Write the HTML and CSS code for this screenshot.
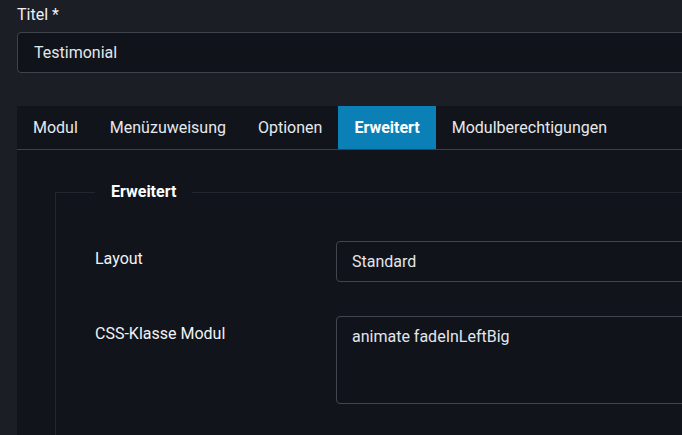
FILE: index.html
```html
<!DOCTYPE html>
<html lang="de">
<head>
<meta charset="utf-8">
<title>Modul</title>
<link rel="stylesheet" href="styles.css">
</head>
<body>
<div class="page">
  <div class="title-field">
    <label class="field-label" for="title">Titel *</label>
    <div class="text-input" id="title">Testimonial</div>
  </div>

  <div class="tabs">
    <div class="tab-bar">
      <div class="tab">Modul</div>
      <div class="tab">Menüzuweisung</div>
      <div class="tab">Optionen</div>
      <div class="tab active">Erweitert</div>
      <div class="tab">Modulberechtigungen</div>
    </div>
    <div class="tab-panel">
      <fieldset class="options">
        <legend class="options-legend">Erweitert</legend>
        <div class="options-body">
          <div class="row">
            <div class="row-label">Layout</div>
            <div class="select-box">Standard</div>
          </div>
          <div class="row">
            <div class="row-label">CSS-Klasse Modul</div>
            <div class="textarea-box">animate fadeInLeftBig</div>
          </div>
        </div>
      </fieldset>
    </div>
  </div>
</div>
</body>
</html>
```

FILE: styles.css
```css
html, body {
  margin: 0;
  height: 435px;
  overflow: hidden;
  background: #1b1e25;
}

body {
  font-family: Roboto, "Liberation Sans", sans-serif;
  font-size: 16px;
  color: #e8ebef;
}

.page {
  width: 760px;
  padding: 4px 0 0 17px;
}

.title-field {
  display: flex;
  flex-direction: column;
}

.field-label {
  line-height: 22px;
  height: 22px;
  margin-bottom: 6px;
  color: #eef0f3;
}

.text-input {
  height: 39px;
  line-height: 40px;
  padding: 0 16px;
  border: 1px solid #3f434b;
  border-radius: 4px;
  background: #10131a;
  color: #e3e6ea;
}

.tabs {
  margin-top: 33px;
  background: #11141b;
}

.tab-bar {
  display: flex;
  height: 43px;
  border-bottom: 1px solid #3c4048;
}

.tab {
  padding: 0 16px;
  line-height: 44px;
  height: 43px;
  color: #e6e9ed;
  white-space: nowrap;
}

.tab.active {
  background: #0b80b7;
  color: #ffffff;
  font-weight: 700;
}

.tab-panel {
  padding: 31px 0 0 38px;
  background: #11141b;
}

.options {
  margin: 0;
  padding: 0;
  border: 1px solid #22262e;
  border-right: none;
  min-width: 0;
}

.options-legend {
  margin-left: 39px;
  padding: 0 16px;
  line-height: 22px;
  font-weight: 700;
  color: #ffffff;
}

.options-body {
  padding: 38px 0 80px 39px;
  display: flex;
  flex-direction: column;
  gap: 34px;
}

.row {
  display: grid;
  grid-template-columns: 241px 1fr;
}

.row-label {
  padding-top: 7px;
  line-height: 22px;
  color: #f0f2f5;
}

.select-box {
  height: 39px;
  line-height: 40px;
  padding: 0 15px;
  border: 1px solid #41454d;
  border-radius: 4px;
  background: #10131a;
  color: #e3e6ea;
}

.textarea-box {
  box-sizing: border-box;
  height: 88px;
  padding: 9px 15px;
  line-height: 22px;
  border: 1px solid #41454d;
  border-radius: 4px;
  background: #10131a;
  color: #e3e6ea;
}
```
